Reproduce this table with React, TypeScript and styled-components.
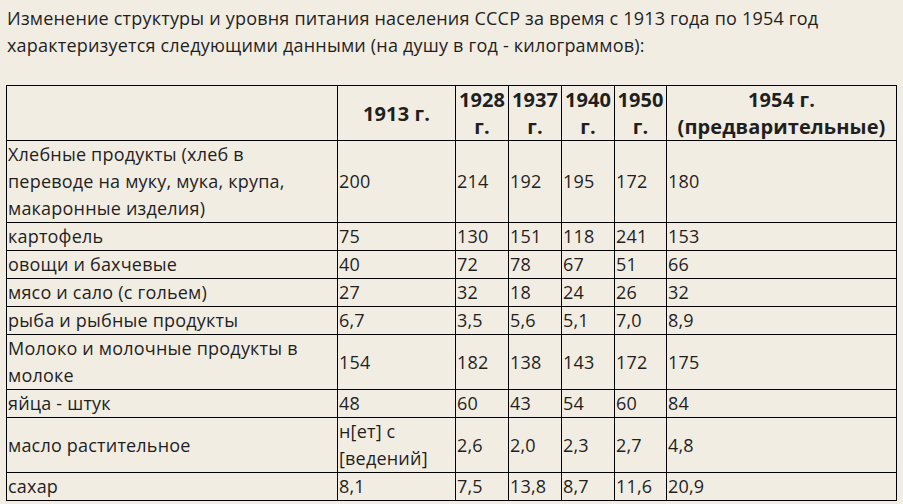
import React from "react";
import styled, { createGlobalStyle } from "styled-components";

const GlobalStyle = createGlobalStyle`
  html, body {
    margin: 0;
    padding: 0;
    background: #f2ede3;
  }
  body {
    font-family: "Open Sans", "Liberation Sans", sans-serif;
    color: #1f1f1f;
  }
`;

const Page = styled.div`
  padding: 5px 7px 0 6px;
  font-size: 18px;
  line-height: 27px;
  letter-spacing: 0.2px;
`;

const Intro = styled.p`
  margin: 0 0 26px 1px;
  white-space: nowrap;
`;

const Table = styled.table`
  width: 890px;
  border-collapse: collapse;
  table-layout: fixed;
`;

const HeadCell = styled.th`
  border: 1px solid #000;
  padding: 0 1px;
  font-size: 20px;
  font-weight: 700;
  letter-spacing: 0.1px;
  text-align: center;
  vertical-align: middle;
`;

const Cell = styled.td<{ $label?: boolean }>`
  border: 1px solid #000;
  padding: ${({ $label }) => ($label ? "0 10px 0 1px" : "0 1px")};
  text-align: left;
  vertical-align: middle;
`;

const widths = [331, 118, 53, 53, 53, 52, 230];

const rows: string[][] = [
  ["Хлебные продукты (хлеб в переводе на муку, мука, крупа, макаронные изделия)", "200", "214", "192", "195", "172", "180"],
  ["картофель", "75", "130", "151", "118", "241", "153"],
  ["овощи и бахчевые", "40", "72", "78", "67", "51", "66"],
  ["мясо и сало (с гольем)", "27", "32", "18", "24", "26", "32"],
  ["рыба и рыбные продукты", "6,7", "3,5", "5,6", "5,1", "7,0", "8,9"],
  ["Молоко и молочные продукты в молоке", "154", "182", "138", "143", "172", "175"],
  ["яйца - штук", "48", "60", "43", "54", "60", "84"],
  ["масло растительное", "н[ет] с [ведений]", "2,6", "2,0", "2,3", "2,7", "4,8"],
  ["сахар", "8,1", "7,5", "13,8", "8,7", "11,6", "20,9"],
];

const App = () => (
  <>
    <GlobalStyle />
    <Page>
      <Intro>
        Изменение структуры и уровня питания населения СССР за время с 1913 года по 1954 год
        <br />
        характеризуется следующими данными (на душу в год - килограммов):
      </Intro>
      <Table>
        <colgroup>
          {widths.map((w, i) => (
            <col key={i} style={{ width: w }} />
          ))}
        </colgroup>
        <thead>
          <tr>
            <HeadCell />
            <HeadCell>1913 г.</HeadCell>
            <HeadCell>1928 г.</HeadCell>
            <HeadCell>1937 г.</HeadCell>
            <HeadCell>1940 г.</HeadCell>
            <HeadCell>1950 г.</HeadCell>
            <HeadCell>
              1954 г.
              <br />
              (предварительные)
            </HeadCell>
          </tr>
        </thead>
        <tbody>
          {rows.map((r) => (
            <tr key={r[0]}>
              {r.map((v, i) => (
                <Cell key={i} $label={i === 0}>
                  {v}
                </Cell>
              ))}
            </tr>
          ))}
        </tbody>
      </Table>
    </Page>
  </>
);

export default App;
